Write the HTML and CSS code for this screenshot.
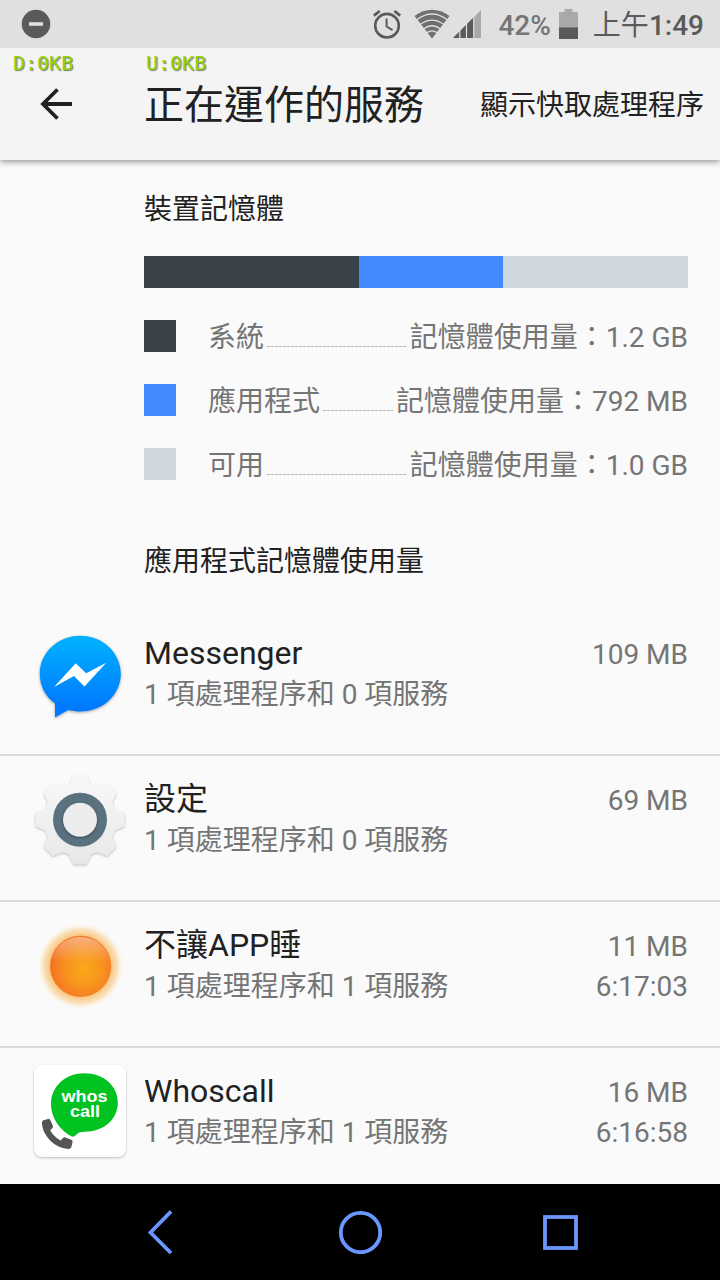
FILE: index.html
```html
<!DOCTYPE html>
<html lang="zh-Hant">
<head>
<meta charset="utf-8">
<title>正在運作的服務</title>
<link rel="stylesheet" href="styles.css">
</head>
<body>
<div class="screen">
  <header class="status">
    <svg class="status-dnd" width="30" height="30" viewBox="0 0 30 30"><circle cx="15" cy="15" r="14.3" fill="#5a5a5a"/><path d="M8 15h14" stroke="#e0e0e0" stroke-width="3.6"/></svg>
    <div class="status-right">
      <svg class="status-alarm" width="30" height="30" viewBox="0 0 30 30" fill="none" stroke="#5a5a5a"><circle cx="15" cy="16.7" r="11.8" stroke-width="2.6"/><path d="M14.6 9.5v8l6 3.7" stroke-width="2"/><path d="M1.9 6.700l5.800-4.700M22.400 2l5.800 4.700" stroke-width="2.800"/></svg>
      <svg class="status-wifi" width="36" height="30" viewBox="0 0 36 30">
        <path d="M.5 7Q18-5.500 35.500 7L18 29.500Z" fill="#707070"/>
        <path d="M3 10.500Q18-.5 33 10.500M6.500 15.300Q18 7 29.500 15.300M10 19.500Q18 14 26 19.500M13 23.600Q18 20.300 23 23.600" fill="none" stroke="#e0e0e0" stroke-width="1.300"/>
      </svg>
      <svg class="status-cell" width="28" height="28" viewBox="0 0 28 28"><path d="M28 0v28H0Z" fill="#a9a9a9"/><path d="M21 7v21H0Z" fill="#5a5a5a"/><path d="M6.800 18v10M13.500 12v16M20.700 5v23" stroke="#e0e0e0" stroke-width="1.200"/></svg>
      <span class="status-pct">42%</span>
      <svg class="status-battery" width="19" height="30" viewBox="0 0 19 30"><path d="M5.500 0h8v3H19v15.500H0V3h5.500Z" fill="#a9a9a9"/><path d="M0 18.300h19V30H0Z" fill="#5a5a5a"/></svg>
      <span class="status-time"><span class="status-ampm">上午</span>1:49</span>
    </div>
  </header>

  <div class="appbar">
    <svg class="back" width="32" height="32" viewBox="0 0 32 32" fill="none" stroke="#212121" stroke-width="3.800"><path d="M32 16H3M17.500 1.500L3 16l14.500 14.500"/></svg>
    <h1 class="appbar-title">正在運作的服務</h1>
    <span class="appbar-action">顯示快取處理程序</span>
  </div>
  <div class="net net-down">D:0KB</div>
  <div class="net net-up">U:0KB</div>

  <main class="content">
    <section class="memory">
      <h2 class="heading">裝置記憶體</h2>
      <div class="bar"><div class="bar-system"></div><div class="bar-apps"></div><div class="bar-free"></div></div>
      <div class="legend">
        <div class="legend-row"><i class="swatch bar-system-color"></i><span class="legend-text">系統</span><i class="dots"></i><span class="legend-text">記憶體使用量：1.2 GB</span></div>
        <div class="legend-row"><i class="swatch bar-apps-color"></i><span class="legend-text">應用程式</span><i class="dots"></i><span class="legend-text">記憶體使用量：792 MB</span></div>
        <div class="legend-row"><i class="swatch bar-free-color"></i><span class="legend-text">可用</span><i class="dots"></i><span class="legend-text">記憶體使用量：1.0 GB</span></div>
      </div>
      <h2 class="heading">應用程式記憶體使用量</h2>
    </section>

    <div class="list">
      <div class="item">
        <svg class="item-icon" width="96" height="100" viewBox="12 4 96 100">
          <defs><linearGradient id="msg" x1="0" y1="0" x2="0" y2="1"><stop offset="0" stop-color="#00b2ff"/><stop offset=".9" stop-color="#0078ff"/></linearGradient></defs>
          <path class="lifted" d="M60.300 15.700c22.500 0 40.500 17 40.500 38s-18 37.800-40.500 37.800c-4.300 0-8.300-.6-12.200-1.500L35 97.600V83.500C25.500 76.500 19.800 66 19.800 53.700c0-21 18-38 40.500-38Z" fill="url(#msg)"/>
          <path d="M34 67l21.700-23.700L66.200 53.200l20-10.400-21.700 23.700L54 56Z" fill="#fff"/>
        </svg>
        <div class="item-text"><div class="item-title">Messenger</div><div class="item-sub">1 項處理程序和 0 項服務</div></div>
        <div class="item-meta"><div>109 MB</div></div>
      </div>
      <div class="item">
        <svg class="item-icon" width="96" height="100" viewBox="12 5 96 100">
          <defs><linearGradient id="gear" x1="0" y1="0" x2="0" y2="1"><stop offset="0" stop-color="#f8f8f8"/><stop offset="1" stop-color="#e8e8e8"/></linearGradient></defs>
          <g transform="translate(60 54.700)">
            <path class="lifted-soft" d="M-10-34.500L-6-44 6-44 10-34.500 17.300-31.500 27-35.500 35.500-27 31.500-17.300 34.500-10 44-6 44 6 34.500 10 31.500 17.300 35.500 27 27 35.500 17.300 31.500 10 34.500 6 44-6 44-10 34.500-17.300 31.500-27 35.500-35.500 27-31.500 17.300-34.500 10-44 6-44-6-34.500-10-31.500-17.300-35.500-27-27-35.500-17.300-31.500Z" fill="url(#gear)" stroke="url(#gear)" stroke-width="1.500" stroke-linejoin="round"/>
            <circle r="27" fill="#5a7180"/>
            <circle class="lifted" r="17" fill="#ececec"/>
          </g>
        </svg>
        <div class="item-text"><div class="item-title">設定</div><div class="item-sub">1 項處理程序和 0 項服務</div></div>
        <div class="item-meta"><div>69 MB</div></div>
      </div>
      <div class="item">
        <svg class="item-icon" width="96" height="100" viewBox="12 6 96 100">
          <defs>
            <radialGradient id="glow"><stop offset=".7" stop-color="#f8c47c"/><stop offset=".86" stop-color="#fadcb0" stop-opacity=".85"/><stop offset="1" stop-color="#fdf3e4" stop-opacity="0"/></radialGradient>
            <radialGradient id="sun" cx=".56" cy=".55" r=".6"><stop offset="0" stop-color="#fba919"/><stop offset=".5" stop-color="#f8931e"/><stop offset="1" stop-color="#f46c24"/></radialGradient>
            <linearGradient id="gloss" x1="0" y1="0" x2="0" y2="1"><stop offset="0" stop-color="#fff" stop-opacity=".42"/><stop offset="1" stop-color="#fff" stop-opacity="0"/></linearGradient>
          </defs>
          <circle cx="60.600" cy="56.300" r="43" fill="url(#glow)"/>
          <circle cx="60.600" cy="56.300" r="30.300" fill="url(#sun)" stroke="#f0802c" stroke-width=".7"/>
          <path d="M32 52C33 37 46 27 60.600 27S88 37 89.500 52Z" fill="url(#gloss)"/>
        </svg>
        <div class="item-text"><div class="item-title">不讓APP睡</div><div class="item-sub">1 項處理程序和 1 項服務</div></div>
        <div class="item-meta"><div>11 MB</div><div>6:17:03</div></div>
      </div>
      <div class="item">
        <svg class="item-icon" width="96" height="100" viewBox="12 12 96 100">
          <rect class="lifted-soft" x="14" y="15" width="92" height="92" rx="8" fill="#fff"/>
          <path d="M64.500 23.300c19 0 33.300 12.500 33.300 29.300 0 17-14 29.200-33.300 29.200-3.500 0-6 .6-8 2.700-1.500 1.700-3 2.800-5 1.800C42 81.500 31 69.500 31 54c0-17.500 14.500-30.700 33.500-30.700Z" fill="#00c321"/>
          <text class="whos"><tspan x="64.500" y="51.700" textLength="46" lengthAdjust="spacingAndGlyphs">whos</tspan><tspan x="65" y="67.300" textLength="30" lengthAdjust="spacingAndGlyphs">call</tspan></text>
          <path d="M23.500 70.300L28 69c1.300-.3 2 .2 2.500 1.400l2.300 5.300c.4 1 .2 1.800-.6 2.500l-2 2c2 4 6 8 10.500 10.200l2.300-2.300c.7-.8 1.400-.9 2.400-.5l5.800 2.200c1.200.5 1.600 1.300 1.300 2.500l-1 4.300c-.4 1.700-1.500 2.400-3.300 2.300C34 98 22.500 85 22 73.500c0-1.700.2-2.700 1.500-3.200Z" fill="#555"/>
        </svg>
        <div class="item-text"><div class="item-title">Whoscall</div><div class="item-sub">1 項處理程序和 1 項服務</div></div>
        <div class="item-meta"><div>16 MB</div><div>6:16:58</div></div>
      </div>
    </div>
  </main>

  <nav class="navbar">
    <svg width="44" height="44" viewBox="0 0 44 44"><path d="M33 1.500L12.500 22.500 33 43"/></svg>
    <svg width="44" height="44" viewBox="0 0 44 44"><circle cx="22.500" cy="22.500" r="19.700"/></svg>
    <svg width="44" height="44" viewBox="0 0 44 44"><rect x="7" y="7" width="31" height="31"/></svg>
  </nav>
</div>
</body>
</html>
```
FILE: styles.css
```css
* { box-sizing: border-box; }
body { margin: 0; }
.screen {
  position: relative;
  display: flex;
  flex-direction: column;
  width: 720px;
  height: 1280px;
  overflow: hidden;
  background: #fafafa;
  color: #212121;
  font: 400 28px/32px Roboto, "Noto Sans CJK TC", sans-serif;
  white-space: nowrap;
}
svg { display: block; flex: none; }

.status {
  display: flex;
  justify-content: space-between;
  flex: none;
  height: 48px;
  padding: 0 16px 0 21px;
  background: #e0e0e0;
  color: #5a5a5a;
  font-weight: 500;
  line-height: 50px;
}
.status-dnd { margin-top: 9px; }
.status-right { display: flex; }
.status-alarm { margin: 9px 12px 0 0; }
.status-wifi { margin: 9px 3px 0 0; }
.status-cell { margin: 10px 17px 0 0; }
.status-pct { padding-top: 1px; color: #757575; }
.status-time { padding-top: 1px; }
.status-battery { margin: 9px 15px 0 8px; }
.status-ampm { font-weight: 400; }

.appbar {
  display: flex;
  align-items: center;
  flex: none;
  height: 112px;
  padding: 0 16px 0 40px;
  background: #f4f4f4;
  box-shadow: 0 2px 6px rgba(0, 0, 0, .4);
  clip-path: inset(0 0 -12px 0);
  z-index: 1;
}
.appbar-title { margin: 0 0 0 72px; padding-top: 4px; font-size: 40px; font-weight: 400; line-height: 48px; }
.appbar-action { margin-left: auto; padding-top: 4px; }
.net {
  position: absolute;
  top: 51px;
  z-index: 2;
  color: #8fd400;
  font: 20px/24px "DejaVu Sans Mono", monospace;
  text-shadow: 1px 1px 1px #777;
}
.net-down { left: 13px; }
.net-up { left: 146px; }

.content { flex: 1; min-height: 0; overflow: hidden; }
.memory { padding: 34px 32px 0 144px; }
.heading { margin: 0; font-size: 28px; font-weight: 400; line-height: 32px; }
.bar { display: flex; height: 32px; margin: 30px 0 32px; }
.bar-system { width: 215px; background: #3a4249; }
.bar-apps { width: 144px; background: #448aff; }
.bar-free { flex: 1; background: #cfd6dd; }
.legend { display: grid; gap: 32px; margin-bottom: 66px; color: #757575; }
.legend-row { display: flex; height: 32px; }
.legend-text { padding-top: 2px; }
.swatch { width: 32px; height: 32px; margin-right: 32px; }
.bar-system-color { background: #3a4249; }
.bar-apps-color { background: #448aff; }
.bar-free-color { background: #cfd6dd; }
.dots {
  flex: 1;
  height: 1px;
  margin: 26px 3px 0;
  background: repeating-linear-gradient(90deg, #b4b4b4 0 3px, #f4f4f4 3px 4px);
}

.list { margin-top: 32px; }
.item { display: flex; height: 146px; padding: 14px 32px 0; border-bottom: 2px solid #d9d9d9; }
.item-icon { margin-right: 16px; }
.item-text { flex: 1; padding-top: 10px; }
.item-title { font-size: 32px; line-height: 38px; }
.item-sub { padding-top: 2px; color: #757575; line-height: 42px; }
.item-meta { padding-top: 11px; color: #757575; line-height: 40px; text-align: right; }
.lifted { filter: drop-shadow(0 1px 1.500px rgba(0, 0, 0, .35)); }
.lifted-soft { filter: drop-shadow(0 1px 1.200px rgba(0, 0, 0, .24)); }
.whos { fill: #fff; font: 700 17px "Liberation Sans", sans-serif; text-anchor: middle; }

.navbar {
  display: flex;
  justify-content: space-between;
  flex: none;
  height: 96px;
  padding: 26px 138px;
  background: #000;
}
.navbar svg { fill: none; stroke: #6b96ff; stroke-width: 3.800px; }
```
